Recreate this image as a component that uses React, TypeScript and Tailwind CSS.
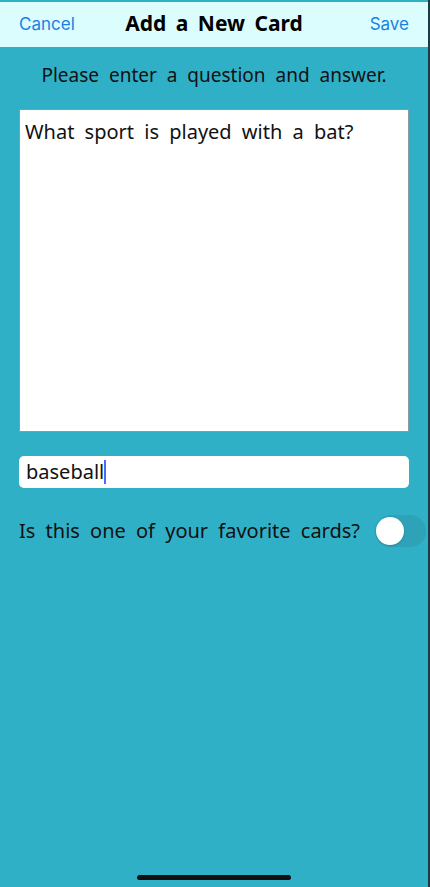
import React from "react";

export default function App() {
  return (
    <div className="w-[430px] h-[887px] bg-[#30b0c7] flex overflow-hidden" style={{ fontFamily: '"Noto Sans", sans-serif' }}>
      <div className="flex-1 flex flex-col relative">
        <div className="h-[2px]" />
        <div className="h-[45px] bg-[#dbfdfd] grid grid-cols-[1fr_auto_1fr] items-center px-[19px]">
          <span className="text-[17px] text-[#1a80e5] justify-self-start" style={{ fontFamily: 'Inter, sans-serif' }}>Cancel</span>
          <span className="text-[21px] font-bold text-black [word-spacing:4px] mt-[-2px]">Add a New Card</span>
          <span className="text-[17px] text-[#1a80e5] justify-self-end" style={{ fontFamily: 'Inter, sans-serif' }}>Save</span>
        </div>
        <div className="text-center text-[19px] text-[#111] mt-[15px] [word-spacing:5px] leading-[26px]">
          Please enter a question and answer.
        </div>
        <div className="mx-[19px] mt-[21px] h-[323px] bg-white border border-[#8a9aa0] px-[5px] pt-[8px] text-[20px] text-[#111] [word-spacing:5px] leading-[28px]">
          What sport is played with a bat?
        </div>
        <div className="mx-[19px] mt-[24px] h-[32px] bg-white rounded-[5px] flex items-center px-[7px] text-[20px] text-[#111]">
          <span>baseball</span>
          <span className="w-[2px] h-[24px] bg-[#4a6cf0]" />
        </div>
        <div className="mt-[27px] flex items-center pl-[19px]">
          <span className="text-[20px] text-[#111] [word-spacing:5px] flex-1">Is this one of your favorite cards?</span>
          <div className="w-[51px] h-[32px] rounded-full bg-[#2ea2b7] relative mr-[2px]">
            <div className="absolute left-[1px] top-[2px] w-[28px] h-[28px] rounded-full bg-white shadow" />
          </div>
        </div>
        <div className="flex-1" />
        <div className="flex justify-center pb-[7px]">
          <div className="w-[154px] h-[5px] rounded-full bg-[#111]" />
        </div>
      </div>
      <div className="w-[2px] bg-[#1c3c44]" />
    </div>
  );
}
